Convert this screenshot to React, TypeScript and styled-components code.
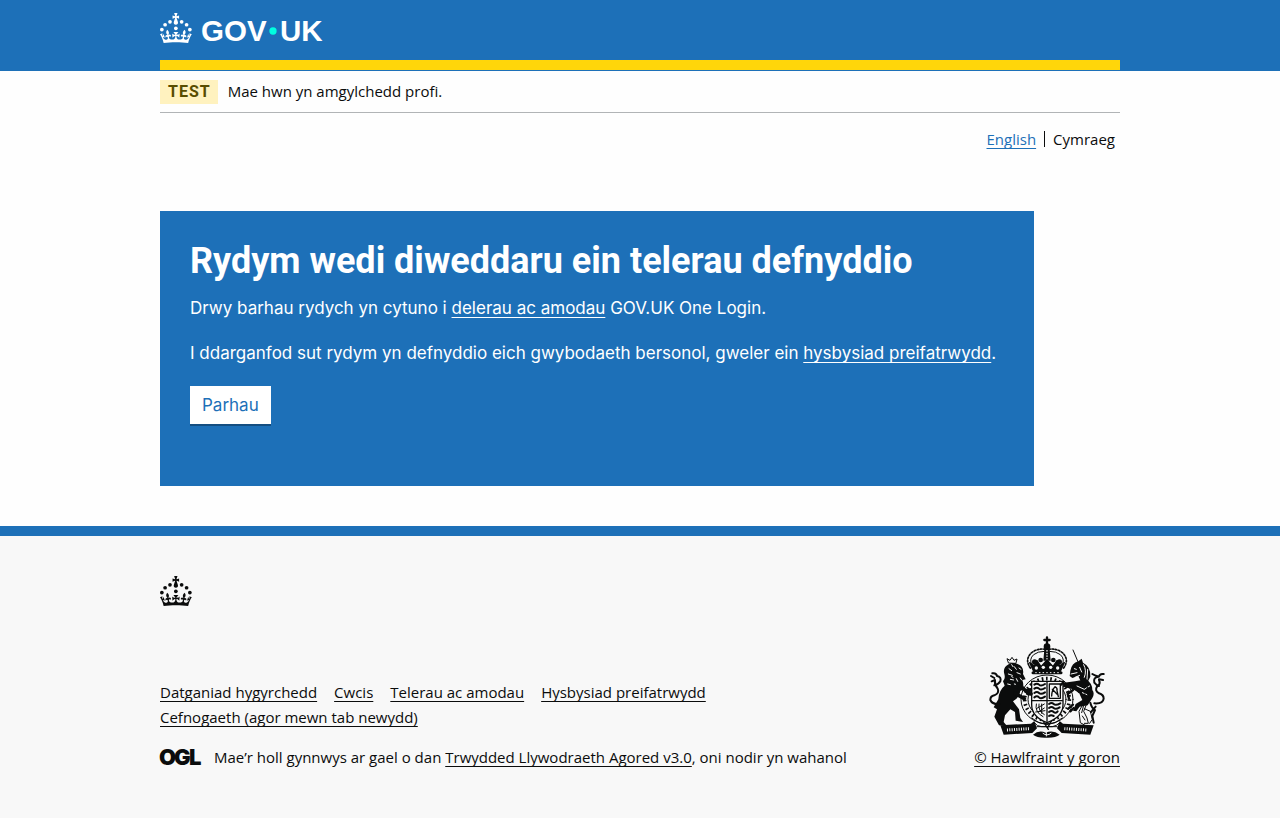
import React from "react";
import styled, { createGlobalStyle } from "styled-components";

const blue = "#1d70b8";
const black = "#0b0c0c";
const smallFont = `"Open Sans", "Noto Sans", sans-serif`;
const bodyFont = `Inter, "Noto Sans", sans-serif`;
const boldFont = `Roboto, "Noto Sans", sans-serif`;

const GlobalStyle = createGlobalStyle`
  *, *::before, *::after { box-sizing: border-box; }
  html { background: #f8f8f8; }
  body {
    margin: 0;
    background: #fefefe;
    color: ${black};
    font: 15px/20px ${smallFont};
  }
`;

const Container = styled.div`
  max-width: 960px;
  margin: 0 auto;
  @media (max-width: 1020px) {
    margin: 0 30px;
  }
`;

const Header = styled.header`
  background: ${blue};
  border-bottom: 1px solid ${blue};
`;

const HeaderInner = styled(Container)`
  padding: 13px 0 17px;
  border-bottom: 10px solid #ffd60a;
`;

const HomeLink = styled.a`
  display: block;
  width: 162px;
  height: 30px;
  color: #fff;
  svg {
    display: block;
    overflow: visible;
  }
`;

const PhaseBanner = styled(Container)`
  display: flex;
  align-items: flex-start;
  gap: 10px;
  padding: 9px 0 8px;
  border-bottom: 1px solid #b1b4b6;
`;

const Tag = styled.strong`
  padding: 2px 7px 2px 8px;
  background: #fff2bf;
  color: #594d00;
  font: 700 16px/20px ${boldFont};
  letter-spacing: 1px;
`;

const PhaseText = styled.span`
  line-height: 22px;
`;

const LanguageNav = styled.nav`
  display: flex;
  justify-content: flex-end;
  padding: 16px 5px 0 0;
`;

const LanguageList = styled.ul`
  display: flex;
  align-items: center;
  margin: 0;
  padding: 0;
  list-style: none;
`;

const LanguageItem = styled.li`
  & + & {
    display: flex;
    align-items: center;
  }
  & + &::before {
    content: "";
    width: 1px;
    height: 16px;
    margin: 0 8px;
    background: ${black};
  }
`;

const Link = styled.a`
  color: ${black};
  text-decoration: underline;
  text-decoration-thickness: 1px;
  text-decoration-skip-ink: none;
  text-underline-offset: 3px;
`;

const BlueLink = styled(Link)`
  color: ${blue};
`;

const InverseLink = styled(Link)`
  color: #fff;
`;

const Main = styled.main`
  padding: 62px 0 40px;
`;

const Panel = styled.section`
  width: 91%;
  padding: 30px 30px 62px;
  background: ${blue};
  color: #fff;
  font: 17px/25px ${bodyFont};
`;

const Title = styled.h1`
  margin: 0 0 15px;
  font: 700 36px/40px ${boldFont};
`;

const Paragraph = styled.p`
  margin: 0 0 20px;
`;

const Button = styled.button`
  display: block;
  padding: 7px 12px 6px;
  border: 0;
  background: #fff;
  box-shadow: 0 2px 0 #144e81;
  color: ${blue};
  font: 17px/25px ${bodyFont};
  cursor: pointer;
`;

const Footer = styled.footer`
  padding: 40px 0 51px;
  border-top: 10px solid ${blue};
  background: #f8f8f8;
`;

const FooterCrown = styled.div`
  height: 30px;
  margin-bottom: 30px;
  svg {
    display: block;
  }
`;

const FooterMeta = styled.div`
  display: flex;
  flex-wrap: wrap;
  justify-content: space-between;
  align-items: flex-end;
  gap: 30px;
`;

const FooterMain = styled.div`
  flex: 1;
`;

const FooterLinks = styled.ul`
  display: flex;
  flex-wrap: wrap;
  gap: 5px 17px;
  max-width: 600px;
  margin: 0 0 20px;
  padding: 0;
  list-style: none;
`;

const Licence = styled.div`
  display: flex;
  align-items: center;
  gap: 13px;
  svg {
    flex: none;
    overflow: visible;
  }
`;

const Copyright = styled(Link)`
  display: flex;
  flex-direction: column;
  align-items: center;
  gap: 9px;
`;

const CrownShape = () => (
  <g fill="currentColor">
    <circle cx="20" cy="17.6" r="3.7" />
    <circle cx="10.2" cy="23.5" r="3.7" />
    <circle cx="3.7" cy="33.2" r="3.7" />
    <circle cx="31.7" cy="30.6" r="3.7" />
    <circle cx="43.3" cy="17.6" r="3.7" />
    <circle cx="53.2" cy="23.5" r="3.7" />
    <circle cx="59.7" cy="33.2" r="3.7" />
    <path d="M33.1,9.8c.2-.1.3-.3.5-.5l4.6,2.4v-6.8l-4.6,1.5c-.1-.2-.3-.3-.5-.5l1.9-5.9h-6.7l1.9,5.9c-.2.1-.3.3-.5.5l-4.6-1.5v6.8l4.6-2.4c.1.2.3.3.5.5l-2.6,8c-.9,2.8,1.2,5.7,4.1,5.7h0c3,0,5.1-2.9,4.1-5.7l-2.6-8ZM37,37.9s-3.4,3.8-4.1,6.1c2.2,0,4.2-.5,6.4-2.8l-.7,8.5c-2-2.8-4.4-4.1-5.7-3.8.1,3.1.5,6.7,5.8,7.2,3.7.3,6.7-1.5,7-3.8.4-2.6-2-4.3-3.7-1.6-1.4-4.5,2.4-6.1,4.9-3.2-1.9-4.5-1.8-7.7,2.4-10.9,3,4,2.6,7.3-1.2,11.1,2.4-1.3,6.2,0,4,4.6-1.2-2.8-3.7-2.2-4.2.2-.3,1.7.7,3.7,3,4.2,1.9.3,4.7-.9,7-5.9-1.3,0-2.4.7-3.9,1.7l2.4-8c.6,2.3,1.4,3.7,2.2,4.5.6-1.6.5-2.8,0-5.3l5,1.8c-2.6,3.6-5.2,8.7-7.3,17.5-7.4-1.1-15.7-1.7-24.5-1.7h0c-8.8,0-17.1.6-24.5,1.7-2.1-8.9-4.7-13.9-7.3-17.5l5-1.8c-.5,2.5-.6,3.7,0,5.3.8-.8,1.6-2.3,2.2-4.5l2.4,8c-1.5-1-2.6-1.7-3.9-1.7,2.3,5,5.2,6.2,7,5.9,2.3-.4,3.3-2.4,3-4.2-.5-2.4-3-3.1-4.2-.2-2.2-4.6,1.6-6,4-4.6-3.7-3.7-4.2-7.1-1.2-11.1,4.2,3.2,4.3,6.4,2.4,10.9,2.5-2.8,6.3-1.3,4.9,3.2-1.8-2.7-4.1-1-3.7,1.6.3,2.3,3.3,4.1,7,3.8,5.4-.5,5.7-4.2,5.8-7.2-1.3-.2-3.7,1-5.7,3.8l-.7-8.5c2.2,2.3,4.2,2.7,6.4,2.8-.7-2.3-4.1-6.1-4.1-6.1h10.6,0Z" />
  </g>
);

const GovukLogo = () => (
  <svg viewBox="0 0 324 60" width="162" height="30" role="img" aria-label="GOV.UK">
    <CrownShape />
    <g fill="currentColor" fontFamily="Liberation Sans, Arial, sans-serif" fontWeight="700" fontSize="59">
      <text x="82" y="56">GOV</text>
      <text x="240" y="56">UK</text>
    </g>
    <circle cx="226" cy="36" r="7.3" fill="#00ffe0" />
  </svg>
);

const OglLogo = () => (
  <svg width="41" height="17" viewBox="0 0 41 17" role="img" aria-label="OGL">
    <g fill="currentColor" fontFamily="Inter, sans-serif" fontWeight="900" fontSize="22">
      <text x="-1" y="16">O</text>
      <text x="14" y="16">G</text>
      <text x="29" y="16">L</text>
    </g>
  </svg>
);

/* Royal coat of arms: crown, garter and shield between lion and unicorn. */
const CoatOfArms = () => (
  <svg width="116" height="102" viewBox="62 46 348 306" fill="none" stroke={black} strokeWidth="4" strokeLinecap="round" strokeLinejoin="round" aria-hidden="true">
    {/* crown */}
    <path d="M236 50v22M228 58h16" strokeWidth="7" />
    <circle cx="236" cy="78" r="8" fill={black} />
    <path d="M228 86q8 6 16 0l3 34h-22z" fill={black} stroke="none" />
    <path d="M236 90v26" stroke="#f8f8f8" strokeWidth="4" strokeDasharray="1 7" />
    <path d="M186 142q-18-26 4-46 18-14 42-10M286 142q18-26-4-46-18-14-42-10" strokeWidth="5" strokeDasharray="5 5" />
    <path d="M192 136q-12-20 4-34 12-10 32-10M280 136q12-20-4-34-12-10-32-10" strokeWidth="3" />
    <path d="M184 126l12 26h80l12-26-14 10-8-16-12 18-18-20-18 20-12-18-8 16z" fill={black} />
    <g fill="#f8f8f8" stroke="none">
      <circle cx="204" cy="142" r="5" />
      <circle cx="225" cy="140" r="5" />
      <circle cx="247" cy="140" r="5" />
      <circle cx="268" cy="142" r="5" />
    </g>
    <g fill={black} stroke="none">
      <circle cx="199" cy="124" r="8" />
      <circle cx="217" cy="118" r="7" />
      <circle cx="255" cy="118" r="7" />
      <circle cx="273" cy="124" r="8" />
    </g>
    <path d="M194 156h84" strokeWidth="9" />
    <path d="M202 156h70" stroke="#f8f8f8" strokeWidth="3" strokeDasharray="2 9" />

    {/* garter */}
    <ellipse cx="236" cy="236" rx="78" ry="73" strokeWidth="3" />
    <ellipse cx="236" cy="236" rx="67" ry="62" strokeWidth="11" strokeDasharray="5 8" strokeLinecap="butt" />
    <ellipse cx="236" cy="236" rx="57" ry="53" strokeWidth="3" />

    {/* quartered shield */}
    <path d="M190 182h94v70q0 36-48 54-46-18-46-54z" fill="#f8f8f8" strokeWidth="4" />
    <path d="M236 184v118M192 240h90" strokeWidth="4" />
    <path d="M198 192q8-6 14 0t18-2M198 204q8-6 14 0t18-2M198 217q8-6 14 0t18-2M198 230q8-6 14 0t18-2" strokeWidth="6" />
    <path d="M243 190h33v43h-33zM250 226q0-18 10-28 8 4 6 12l4 18M252 206l16 16" strokeWidth="4" />
    <path d="M204 250q-6 24 20 38M212 250q-4 20 16 32M220 250v28M228 250l-24 14M228 262l-18 12M202 274l28-4" strokeWidth="3" />
    <path d="M242 250q8-6 14 0t20-2M242 262q8-6 14 0t18-2M242 274q8-6 14 0t12-2M242 286q6-4 14 0" strokeWidth="6" />

    {/* lion */}
    <path d="M120 126l-4-12 9 5 6-9 6 9 9-4-3 12z" strokeWidth="3" />
    <path d="M122 130q-20 10-14 30 4 14-4 22l10 26q22 14 48 0 6-12 0-30l10-2-8-16q4-22-16-30-14-6-26 0z" fill={black} stroke="none" />
    <path d="M122 144l8 6M138 138l6 8M120 160l12 4M146 156l10 4M126 176l10 2M144 174l4 8M138 190l8 2M152 142l6 4M130 132l4 6M130 168l4 2M118 190l8 2M156 172l4 6" stroke="#f8f8f8" strokeWidth="3" />
    <path d="M112 192q-22 18-22 44l-14 24 10 6-8 22 14 26 24 2-10-12 4-20 16-18 14 8 2 26 22 4-8-12-4-26-18-24q22-14 22-34z" fill={black} stroke="none" />
    <path d="M148 190l34 28M140 218l28 16M174 212l12-4M178 218l10 2" strokeWidth="11" />
    <path d="M94 250q-22 2-28-12 0-12 12-14 16-6 10-20-10-12-8-24" strokeWidth="6" />
    <path d="M72 158q12-2 14 8 14 2 10 16-6 10-18 12M68 166l10 6M70 182l10-4" strokeWidth="6" />

    {/* unicorn */}
    <path d="M314 88l16 38" strokeWidth="3" />
    <path d="M306 150q4-22 24-28l10-8 4 12q24 12 22 42l-10 20-18-4-8-18-18 6-8-6z" fill={black} stroke="none" />
    <path d="M318 144l6 2M308 160l18-4M320 170l14-6M346 132q10 18 2 38M334 140l6 14M358 146l-2 30" stroke="#f8f8f8" strokeWidth="3" />
    <path d="M286 186l34-4 34-6q18 12 18 32 8 10 0 24l-14 22-24 4-10 14-10-2 8-20 20-12-10-22-18-10-30-8z" fill={black} stroke="none" />
    <path d="M286 184l-8 8M314 208l-16 12 4 14M320 200l12 14M316 262l-10 10M314 252l-14 12" strokeWidth="7" />
    <path d="M326 196l22 10 16-10M342 216l14 6" stroke="#f8f8f8" strokeWidth="3" />
    <path d="M358 200q-14 20-6 36l-20 36 4 34 14 8M366 206q2 22-8 36l-12 30 10 20 4 16h-12M354 214l6 10-6 12 6 10M346 254l-6 22M342 286l8 12M348 264l18 8 6 24-8 12" strokeWidth="3" />
    <path d="M366 246q4 16 14 22l-8 18 4 20M382 258l-14 16" strokeWidth="6" />
    <path d="M378 248q26 2 28-14 0-12-14-16-14-8-6-20 12-8 6-20" strokeWidth="6" />
    <path d="M406 160q-12-2-14 8-14-4-20-8M390 168q-16 2-12 18 6 8 14 10M404 178l-12-2" strokeWidth="6" />

    {/* motto ribbons */}
    <path d="M96 314l92-5 10-8 8 22-14 14-86 5z" fill={black} stroke="none" />
    <path d="M376 314l-92-5-10-8-8 22 14 14 86 5z" fill={black} stroke="none" />
    <path d="M116 328l68-4M288 324l68 4" stroke="#f8f8f8" strokeWidth="9" strokeDasharray="3 4" strokeLinecap="butt" />
    <path d="M190 292q46 40 92 0M198 306q8 12 22 12l32 0q14-2 22-12M206 318l60 0" strokeWidth="3" />
    <path d="M226 304l14 22M250 300l-12 20" strokeWidth="4" />
    <path d="M194 342q18-16 38-6 22-10 42 6-12 10-40 9-28 1-40-9z" fill={black} stroke="none" />
    <path d="M224 338q12 10 24 0M234 334v12" stroke="#f8f8f8" strokeWidth="3" />
  </svg>
);

export default function App() {
  return (
    <>
      <GlobalStyle />
      <Header>
        <HeaderInner>
          <HomeLink href="#" aria-label="GOV.UK">
            <GovukLogo />
          </HomeLink>
        </HeaderInner>
      </Header>

      <PhaseBanner>
        <Tag>TEST</Tag>
        <PhaseText>Mae hwn yn amgylchedd profi.</PhaseText>
      </PhaseBanner>

      <Container>
        <LanguageNav aria-label="Dewis iaith">
          <LanguageList>
            <LanguageItem>
              <BlueLink href="#" lang="en">English</BlueLink>
            </LanguageItem>
            <LanguageItem aria-current="true">Cymraeg</LanguageItem>
          </LanguageList>
        </LanguageNav>

        <Main>
          <Panel>
            <Title>Rydym wedi diweddaru ein telerau defnyddio</Title>
            <Paragraph>
              Drwy barhau rydych yn cytuno i <InverseLink href="#">delerau ac amodau</InverseLink> GOV.UK One Login.
            </Paragraph>
            <Paragraph>
              I ddarganfod sut rydym yn defnyddio eich gwybodaeth bersonol, gweler ein{" "}
              <InverseLink href="#">hysbysiad preifatrwydd</InverseLink>.
            </Paragraph>
            <Button type="button">Parhau</Button>
          </Panel>
        </Main>
      </Container>

      <Footer>
        <Container>
          <FooterCrown>
            <svg viewBox="0 0 64 60" width="32" height="30" aria-hidden="true">
              <CrownShape />
            </svg>
          </FooterCrown>
          <FooterMeta>
            <FooterMain>
              <FooterLinks>
                <li><Link href="#">Datganiad hygyrchedd</Link></li>
                <li><Link href="#">Cwcis</Link></li>
                <li><Link href="#">Telerau ac amodau</Link></li>
                <li><Link href="#">Hysbysiad preifatrwydd</Link></li>
                <li><Link href="#">Cefnogaeth (agor mewn tab newydd)</Link></li>
              </FooterLinks>
              <Licence>
                <OglLogo />
                <span>
                  Mae’r holl gynnwys ar gael o dan <Link href="#">Trwydded Llywodraeth Agored v3.0</Link>, oni nodir yn wahanol
                </span>
              </Licence>
            </FooterMain>
            <Copyright href="#">
              <CoatOfArms />
              <span>© Hawlfraint y goron</span>
            </Copyright>
          </FooterMeta>
        </Container>
      </Footer>
    </>
  );
}
